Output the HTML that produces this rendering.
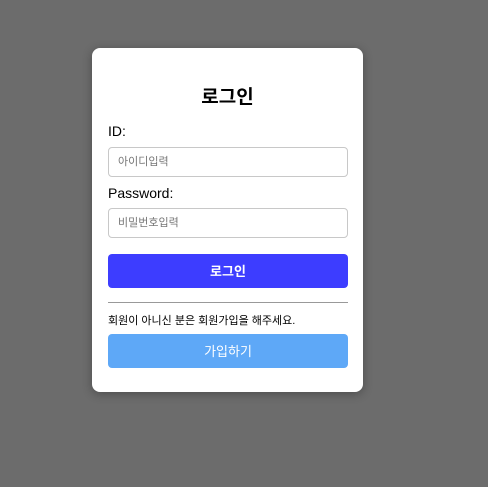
<!DOCTYPE html>
<html><head><meta charset="utf-8"><style>
html,body{margin:0;padding:0;}
body{width:488px;height:487px;background:#6c6c6c;position:relative;overflow:hidden;font-family:"Liberation Sans","Noto Sans CJK KR",sans-serif;}
.card{position:absolute;left:92px;top:48px;width:271px;height:344px;background:#fff;border-radius:8px;box-shadow:0 2px 10px rgba(0,0,0,0.3);}
.abs{position:absolute;}
h1{position:absolute;left:0;width:271px;top:34px;margin:0;text-align:center;font-size:19px;font-weight:bold;color:#000;}
.lbl{position:absolute;left:16px;font-size:14px;color:#000;}
.inp{position:absolute;left:16px;height:28px;border:1px solid #c8c8c8;border-radius:4px;font-size:11px;color:#777;line-height:28px;padding-left:9px;width:229px;}
.btn{position:absolute;left:16px;width:240px;height:34px;border-radius:4px;color:#fff;font-size:13px;font-weight:bold;text-align:center;line-height:36px;}
</style></head><body>
<div class="card">
<h1>로그인</h1>
<div class="lbl" style="top:75px">ID:</div>
<div class="inp" style="top:99px">아이디입력</div>
<div class="lbl" style="top:137px">Password:</div>
<div class="inp" style="top:160px">비밀번호입력</div>
<div class="btn" style="top:206px;background:#3d3dff">로그인</div>
<div class="abs" style="left:16px;top:254px;width:240px;height:1px;background:#999"></div>
<div class="abs" style="left:16px;top:264px;font-size:11px;color:#000">회원이 아니신 분은 회원가입을 해주세요.</div>
<div class="btn" style="top:286px;background:#5ea8f7;font-weight:normal">가입하기</div>
</div>
</body></html>
